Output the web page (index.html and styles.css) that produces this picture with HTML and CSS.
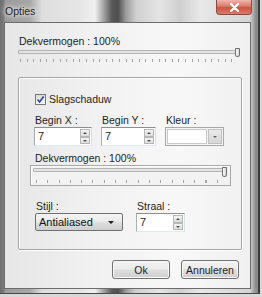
FILE: index.html
```html
<!DOCTYPE html>
<html lang="nl">
	<head>
		<meta charset="UTF-8">
		<title>Opties</title>
		<link rel="stylesheet" href="styles.css">
	</head>
	<body>
		<div class="window">
			<!--titelbalk-->
			<div class="titlebar">
				<span class="title">Opties</span>
				<span class="close">
					<svg width="11" height="9" viewBox="0 0 11 9">
						<path d="M2 1 L9 8 M9 1 L2 8" stroke="#fff" stroke-width="2.2" stroke-linecap="round"/>
					</svg>
				</span>
			</div>
			<div class="client">
				<div class="label first">Dekvermogen : 100%</div>
				<div class="slider top">
					<div class="track"></div>
					<div class="thumb"></div>
					<div class="ticks"></div>
				</div>

				<div class="group">
					<label class="check"><span class="box">
						<svg width="9" height="9" viewBox="0 0 9 9">
							<path d="M1.5 4.5 L3.6 7 L7.6 1.5" stroke="#2a4a8a" stroke-width="1.6" fill="none"/>
						</svg>
					</span>Slagschaduw</label>

					<div class="row three">
						<div class="field">
							<div class="label">Begin X :</div>
							<div class="input"><span class="val">7</span><span class="spin"><i class="up"></i><i class="down"></i></span></div>
						</div>
						<div class="field">
							<div class="label">Begin Y :</div>
							<div class="input"><span class="val">7</span><span class="spin"><i class="up"></i><i class="down"></i></span></div>
						</div>
						<div class="field">
							<div class="label">Kleur :</div>
							<div class="input color"><span class="val"></span><span class="drop"><i></i></span></div>
						</div>
					</div>

					<div class="label second">Dekvermogen : 100%</div>
					<div class="slider inner">
						<div class="track"></div>
						<div class="thumb"></div>
						<div class="ticks"></div>
					</div>

					<div class="row two">
						<div class="field">
							<div class="label">Stijl :</div>
							<div class="combo"><span>Antialiased</span><i></i></div>
						</div>
						<div class="field">
							<div class="label">Straal :</div>
							<div class="input"><span class="val">7</span><span class="spin"><i class="up"></i><i class="down"></i></span></div>
						</div>
					</div>
				</div>

				<div class="buttons">
					<button class="btn">Ok</button>
					<button class="btn">Annuleren</button>
				</div>
			</div>
		</div>
	</body>
</html>
```

FILE: styles.css
```css
* {
	margin: 0;
	padding: 0;
	box-sizing: border-box;
}

body {
	width: 262px;
	height: 297px;
	background: #d8d8d8;
	font-family: "Liberation Sans", Arial, sans-serif;
	font-size: 10.5px;
	color: #1e1e1e;
	overflow: hidden;
}

.window {
	width: 260px;
	height: 294px;
	display: flex;
	flex-direction: column;
	padding: 0 7px 4px 4px;
	border-right: 2px solid #3c3c3c;
	border-bottom: 1px solid #4a4a4a;
	background: linear-gradient(90deg, #6e6e6e 0, #7c7c7c 4px, #9a9a9a 5px, #a8a8a8 30px, #dedede 42px, #e6e6e6 80px, #f0f0f0 95px, #a0a0a0 104px, #585858 112px, #4e4e4e 118px, #9c9c9c 126px, #d0d0d0 136px, #e4e4e4 160px, #cfcfcf 180px, #e8e8e8 200px, #d4d4d4 250px, #8a8a8a 256px);
}

/* titelbalk */
.titlebar {
	height: 22px;
	margin-left: -4px;
	margin-right: -7px;
	padding-left: 5px;
	display: flex;
	justify-content: space-between;
	align-items: flex-start;
}

.title {
	margin-top: 5px;
	font-size: 10.5px;
	color: #202020;
	text-shadow: 0 0 4px #fff, 0 0 6px #fff;
}

.close {
	width: 36px;
	height: 15px;
	margin-right: 6px;
	display: flex;
	align-items: center;
	justify-content: center;
	background: linear-gradient(#eeb8ae, #da7868 45%, #cc5444 55%, #dc7a68);
	border: 1px solid #8a4a44;
	border-top: 0;
	border-radius: 0 0 4px 4px;
}

/* venster inhoud */
.client {
	flex: 1;
	display: flex;
	flex-direction: column;
	padding: 12px 11px 9px 13px;
	border: 1px solid #6c6c6c;
	background: linear-gradient(90deg, #e6e6e6, #f2f2f2 40%, #f8f8f8 70%, #f0f0f0);
}

.label {
	line-height: 13px;
	padding-left: 1px;
	white-space: nowrap;
}

.slider {
	position: relative;
}

.slider.top {
	width: 223px;
	height: 16px;
}

.track {
	position: absolute;
	left: 0;
	right: 2px;
	top: 2px;
	height: 4px;
	background: #e4e4e4;
	border: 1px solid #b4b4b4;
	border-radius: 1px;
}

.thumb {
	position: absolute;
	right: 1px;
	top: 0;
	width: 5px;
	height: 9px;
	background: linear-gradient(90deg, #fdfdfd, #d4d4d4);
	border: 1px solid #707070;
	border-radius: 1px 1px 3px 3px;
}

.ticks {
	position: absolute;
	left: 2px;
	right: 3px;
	top: 11px;
	height: 3px;
	background: repeating-linear-gradient(90deg, #a4a4a4 0, #a4a4a4 1px, transparent 1px, transparent 6.6px);
}

/* groep */
.group {
	width: 224px;
	margin-top: 13px;
	padding: 15px 10px 17px 15px;
	border: 1px solid #a6a6a6;
	border-radius: 2px;
	box-shadow: inset 1px 1px 0 #fff, 1px 1px 0 #fff;
}

.check {
	display: flex;
	align-items: center;
	line-height: 13px;
	padding-left: 1px;
}

.check .box {
	width: 11px;
	height: 11px;
	margin-right: 3px;
	display: flex;
	align-items: center;
	justify-content: center;
	border: 1px solid #7a7a7a;
	background: linear-gradient(#dcdcdc, #f6f6f6);
}

.row {
	display: grid;
}

.row.three {
	margin-top: 8px;
	grid-template-columns: 58px 55px 59px;
	column-gap: 9px;
}

.row.two {
	margin-top: 14px;
	grid-template-columns: 89px 49px;
	column-gap: 13px;
}

.row.two .field:first-child {
	padding-left: 1px;
}

.input {
	height: 19px;
	display: flex;
	background: #fff;
	border: 1px solid #abadb3;
	border-top-color: #8e8f8f;
	border-right-color: #dbdfe6;
	border-bottom-color: #e3e9ef;
}

.val {
	flex: 1;
	padding: 2px 0 0 3px;
	font-size: 11px;
}

.spin {
	width: 10px;
	display: flex;
	flex-direction: column;
	margin: 1px 1px 1px 0;
}

.spin i {
	flex: 1;
	position: relative;
	background: linear-gradient(#f4f4f4, #dcdcdc);
	border: 1px solid #b8b8b8;
}

.spin i::after {
	content: "";
	position: absolute;
	left: 2px;
	border-left: 2px solid transparent;
	border-right: 2px solid transparent;
}

.spin .up::after {
	top: 2px;
	border-bottom: 2px solid #505050;
}

.spin .down::after {
	top: 2px;
	border-top: 2px solid #505050;
}

.input.color {
	background: #f4f4f4;
	border-color: #a8a8a8;
}

.input.color .val {
	margin: 1px;
	background: #fff;
	border: 1px solid #c8c8c8;
}

.drop {
	width: 14px;
	margin: 1px 1px 1px 0;
	display: flex;
	align-items: center;
	justify-content: center;
	background: linear-gradient(#eaeaea, #d6d6d6);
	border: 1px solid #c0c0c0;
}

.drop i {
	border-left: 2px solid transparent;
	border-right: 2px solid transparent;
	border-top: 2px solid #606060;
}

.label.second {
	margin-top: 6px;
}

.slider.inner {
	width: 201px;
	height: 21px;
	margin-left: -4px;
	border: 1px solid #a8a8a8;
	background: #f2f2f2;
	box-shadow: inset 1px 1px 0 #fff;
}

.slider.inner .track {
	left: 2px;
	right: 4px;
	top: 2px;
}

.slider.inner .thumb {
	right: 3px;
	top: 1px;
	height: 10px;
}

.slider.inner .ticks {
	left: 5px;
	right: 5px;
	top: 14px;
	background: repeating-linear-gradient(90deg, #a4a4a4 0, #a4a4a4 1px, transparent 1px, transparent 11.3px);
}

.combo {
	height: 18px;
	display: flex;
	align-items: center;
	justify-content: space-between;
	padding: 0 8px 0 3px;
	font-size: 11px;
	color: #111;
	background: linear-gradient(#f4f4f4, #ebebeb 45%, #dddddd 55%, #cfcfcf);
	border: 1px solid #707070;
	border-radius: 2px;
}

.combo i {
	border-left: 3px solid transparent;
	border-right: 3px solid transparent;
	border-top: 3px solid #202020;
}

/* knoppen */
.buttons {
	margin-top: auto;
	display: flex;
	justify-content: flex-end;
	gap: 11px;
}

.btn {
	width: 58px;
	height: 19px;
	font-family: "Liberation Sans", Arial, sans-serif;
	font-size: 10.5px;
	color: #1e1e1e;
	background: linear-gradient(#f2f2f2, #ebebeb 45%, #dddddd 55%, #cfcfcf);
	border: 1px solid #707070;
	border-radius: 3px;
	box-shadow: inset 0 0 0 1px #fbfbfb;
}
```
